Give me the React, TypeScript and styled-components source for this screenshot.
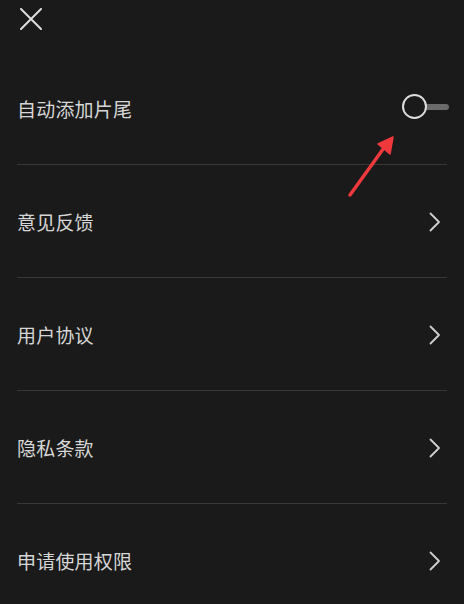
import React from "react";
import styled, { createGlobalStyle } from "styled-components";

const Global = createGlobalStyle`
  html, body { margin: 0; padding: 0; background: #1a1a1a; }
  body { font-family: "Noto Sans CJK SC", "Noto Sans", sans-serif; }
`;

const Page = styled.div`
  position: relative;
  width: 464px;
  height: 604px;
  overflow: hidden;
  background: #1a1a1a;
  color: #d6d6d6;
`;

const Header = styled.div`
  height: 52px;
  display: flex;
  align-items: flex-start;
  padding: 8px 0 0 20px;
  box-sizing: border-box;
`;

const CloseButton = styled.button`
  width: 22px;
  height: 22px;
  padding: 0;
  border: none;
  background: none;
  display: flex;
  align-items: center;
  justify-content: center;
`;

const List = styled.div`
  padding: 0 17px;
  display: flex;
  flex-direction: column;
`;

const Row = styled.div`
  height: 112px;
  border-bottom: 1px solid #383838;
  display: flex;
  align-items: center;
  justify-content: space-between;
  flex-shrink: 0;
`;

const Label = styled.span`
  font-size: 19px;
  line-height: 1;
  letter-spacing: 0.2px;
  color: #d6d6d6;
  margin-top: 1px;
`;

const Chevron = styled.span`
  display: flex;
  margin-right: 6px;
  margin-top: 1px;
`;

const Toggle = styled.div`
  position: relative;
  width: 47px;
  height: 25px;
  margin-right: -2px;
  margin-top: -3px;
`;

const Track = styled.div`
  position: absolute;
  left: 20px;
  right: 0;
  top: 10px;
  height: 6px;
  border-radius: 3px;
  background: #6a6a6a;
`;

const Knob = styled.div`
  position: absolute;
  left: 0;
  top: 0;
  width: 21px;
  height: 21px;
  border: 2px solid #dcdcdc;
  border-radius: 50%;
  background: #1a1a1a;
`;

const Annotation = styled.svg`
  position: absolute;
  left: 340px;
  top: 128px;
  pointer-events: none;
`;

const ChevronIcon = () => (
  <svg width="12" height="20" viewBox="0 0 12 20">
    <path d="M1.5 1.5 L10 10 L1.5 18.5" fill="none" stroke="#cfcfcf" strokeWidth="1.8" strokeLinecap="round" strokeLinejoin="round" />
  </svg>
);

const items = ["意见反馈", "用户协议", "隐私条款", "申请使用权限"];

export default function App() {
  return (
    <Page>
      <Global />
      <Header>
        <CloseButton aria-label="close">
          <svg width="22" height="22" viewBox="0 0 22 22">
            <path d="M1 1 L21 21 M21 1 L1 21" stroke="#dedede" strokeWidth="2" strokeLinecap="round" />
          </svg>
        </CloseButton>
      </Header>
      <List>
        <Row>
          <Label>自动添加片尾</Label>
          <Toggle>
            <Track />
            <Knob />
          </Toggle>
        </Row>
        {items.map((t) => (
          <Row key={t}>
            <Label>{t}</Label>
            <Chevron>
              <ChevronIcon />
            </Chevron>
          </Row>
        ))}
      </List>
      <Annotation width="60" height="74" viewBox="0 0 60 74">
        <path d="M10 67 L46 17" stroke="#f0393d" strokeWidth="3.4" strokeLinecap="round" />
        <path d="M53 9 L38 16 L50 26 Z" fill="#f0393d" stroke="#f0393d" strokeWidth="1.5" strokeLinejoin="round" />
      </Annotation>
    </Page>
  );
}
